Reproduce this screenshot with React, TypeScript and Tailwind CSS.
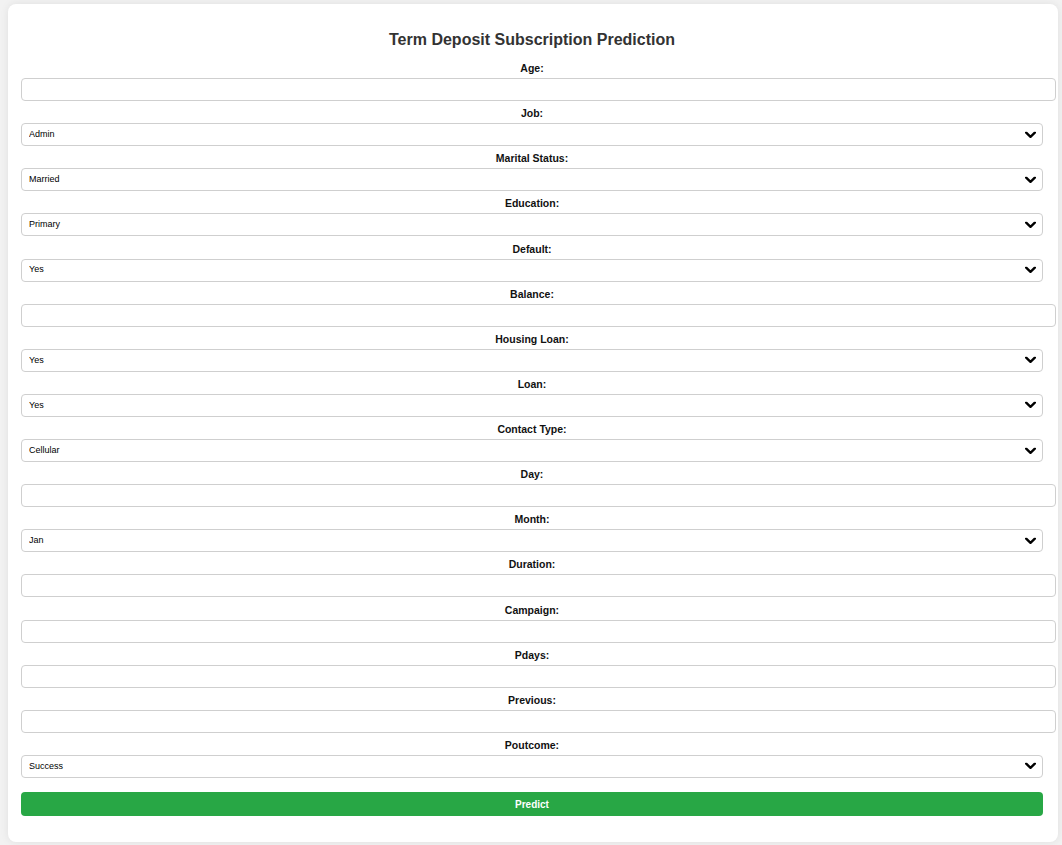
import React, { useState } from "react";

type Field =
  | { name: string; label: string; kind: "input" }
  | { name: string; label: string; kind: "select"; options: string[] };

const yesNo = ["Yes", "No"];

const fields: Field[] = [
  { name: "age", label: "Age:", kind: "input" },
  { name: "job", label: "Job:", kind: "select", options: ["Admin", "Blue-collar", "Entrepreneur", "Housemaid", "Management", "Retired", "Self-employed", "Services", "Student", "Technician", "Unemployed", "Unknown"] },
  { name: "marital", label: "Marital Status:", kind: "select", options: ["Married", "Single", "Divorced"] },
  { name: "education", label: "Education:", kind: "select", options: ["Primary", "Secondary", "Tertiary", "Unknown"] },
  { name: "default", label: "Default:", kind: "select", options: yesNo },
  { name: "balance", label: "Balance:", kind: "input" },
  { name: "housing", label: "Housing Loan:", kind: "select", options: yesNo },
  { name: "loan", label: "Loan:", kind: "select", options: yesNo },
  { name: "contact", label: "Contact Type:", kind: "select", options: ["Cellular", "Telephone", "Unknown"] },
  { name: "day", label: "Day:", kind: "input" },
  { name: "month", label: "Month:", kind: "select", options: ["Jan", "Feb", "Mar", "Apr", "May", "Jun", "Jul", "Aug", "Sep", "Oct", "Nov", "Dec"] },
  { name: "duration", label: "Duration:", kind: "input" },
  { name: "campaign", label: "Campaign:", kind: "input" },
  { name: "pdays", label: "Pdays:", kind: "input" },
  { name: "previous", label: "Previous:", kind: "input" },
  { name: "poutcome", label: "Poutcome:", kind: "select", options: ["Success", "Failure", "Other", "Unknown"] },
];

const Chevron = () => (
  <svg
    width="11"
    height="7"
    viewBox="0 0 11 7"
    className="pointer-events-none absolute right-[7px] top-1/2 -translate-y-1/2"
  >
    <polyline points="1.2,1.2 5.5,5.3 9.8,1.2" fill="none" stroke="#000" strokeWidth="2.4" strokeLinecap="round" strokeLinejoin="round" />
  </svg>
);

const App = () => {
  const [values, setValues] = useState<Record<string, string>>({});

  const update = (name: string, value: string) => {
    setValues((prev) => ({ ...prev, [name]: value }));
  };

  return (
    <div className="min-h-screen w-full bg-[#f2f2f2] px-2 pt-1 pb-1 font-['Liberation_Sans',Arial,sans-serif]">
      <div className="w-[1050px] rounded-lg bg-white pt-[27px] pb-[26px] pl-[13px] pr-[15px] shadow-[0_0_8px_rgba(0,0,0,0.08)]">
        <h2 className="mb-[13px] text-center text-[16px] leading-[18px] font-bold text-[#333]">
          Term Deposit Subscription Prediction
        </h2>
        <form
          className="flex flex-col"
          onSubmit={(e) => {
            e.preventDefault();
          }}
        >
          {fields.map((f) => (
            <div key={f.name} className="mb-[6.13px] flex flex-col">
              <label
                htmlFor={f.name}
                className="mb-[4px] block h-[12px] text-center text-[10.5px] leading-[12px] font-bold text-[#111]"
              >
                {f.label}
              </label>
              {f.kind === "input" ? (
                <input
                  id={f.name}
                  type="text"
                  value={values[f.name] ?? ""}
                  onChange={(e) => update(f.name, e.target.value)}
                  className="h-[23px] w-[calc(100%+13px)] rounded-[4px] border border-[#cfcfcf] bg-white px-[7px] text-[9px] text-black outline-none"
                />
              ) : (
                <div className="relative w-full">
                  <select
                    id={f.name}
                    value={values[f.name] ?? f.options[0]}
                    onChange={(e) => update(f.name, e.target.value)}
                    className="block h-[23px] w-full appearance-none rounded-[4px] border border-[#cfcfcf] bg-white pl-[7px] text-[9px] text-black outline-none"
                  >
                    {f.options.map((o) => (
                      <option key={o} value={o}>
                        {o}
                      </option>
                    ))}
                  </select>
                  <Chevron />
                </div>
              )}
            </div>
          ))}
          <button
            type="submit"
            className="mt-[8px] h-[24px] w-full rounded-[4px] bg-[#28a745] text-[10px] font-bold text-white"
          >
            Predict
          </button>
        </form>
      </div>
    </div>
  );
};

export default App;
